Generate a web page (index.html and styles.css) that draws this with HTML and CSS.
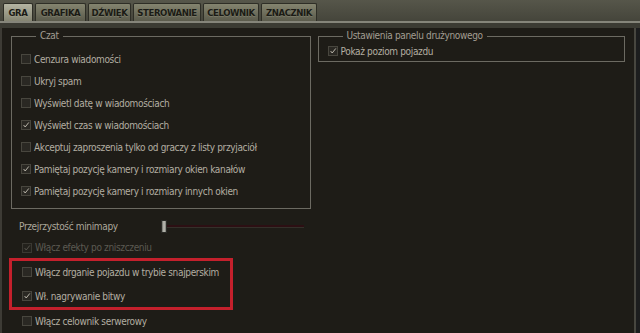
FILE: index.html
```html
<!DOCTYPE html>
<html lang="pl">
<head>
<meta charset="utf-8">
<title>Ustawienia</title>
<link rel="stylesheet" href="styles.css">
</head>
<body>
<div class="tabbar">
  <div class="tab active">GRA</div>
  <div class="tab">GRAFIKA</div>
  <div class="tab">DŹWIĘK</div>
  <div class="tab">STEROWANIE</div>
  <div class="tab">CELOWNIK</div>
  <div class="tab">ZNACZNIK</div>
</div>
<div class="tabline"></div>
<div class="strip"></div>
<div class="panel">
  <div class="groups">
    <fieldset class="group chat">
      <legend>Czat</legend>
      <label class="row"><span class="cb"></span>Cenzura wiadomości</label>
      <label class="row"><span class="cb"></span>Ukryj spam</label>
      <label class="row"><span class="cb"></span>Wyświetl datę w wiadomościach</label>
      <label class="row"><span class="cb on"><svg viewBox="0 0 10 10"><polyline points="2,5 4,7.5 8.5,1.8"/></svg></span>Wyświetl czas w wiadomościach</label>
      <label class="row"><span class="cb"></span>Akceptuj zaproszenia tylko od graczy z listy przyjaciół</label>
      <label class="row"><span class="cb on"><svg viewBox="0 0 10 10"><polyline points="2,5 4,7.5 8.5,1.8"/></svg></span>Pamiętaj pozycję kamery i rozmiary okien kanałów</label>
      <label class="row"><span class="cb on"><svg viewBox="0 0 10 10"><polyline points="2,5 4,7.5 8.5,1.8"/></svg></span>Pamiętaj pozycję kamery i rozmiary innych okien</label>
    </fieldset>
    <fieldset class="group team">
      <legend>Ustawienia panelu drużynowego</legend>
      <label class="row short"><span class="cb on"><svg viewBox="0 0 10 10"><polyline points="2,5 4,7.5 8.5,1.8"/></svg></span>Pokaż poziom pojazdu</label>
    </fieldset>
  </div>
  <div class="slider-row">
    <span class="slider-label">Przejrzystość minimapy</span>
    <span class="thumb"></span>
    <span class="track"></span>
  </div>
  <label class="row loose disabled eff"><span class="cb on"><svg viewBox="0 0 10 10"><polyline points="2,5 4,7.5 8.5,1.8"/></svg></span>Włącz efekty po zniszczeniu</label>
  <div class="highlight">
    <label class="row"><span class="cb"></span>Włącz drganie pojazdu w trybie snajperskim</label>
    <label class="row"><span class="cb on"><svg viewBox="0 0 10 10"><polyline points="2,5 4,7.5 8.5,1.8"/></svg></span>Wł. nagrywanie bitwy</label>
  </div>
  <label class="row loose"><span class="cb"></span>Włącz celownik serwerowy</label>
</div>
</body>
</html>
```
FILE: styles.css
```css
html, body {
  margin: 0;
  padding: 0;
  height: 100%;
  overflow: hidden;
}
body {
  background: #1c1d1e;
  font-family: "DejaVu Sans Condensed", "Liberation Sans", sans-serif;
  font-size: 10px;
  letter-spacing: -0.35px;
  color: #b3aea2;
}
.tabbar {
  height: 18px;
  padding: 3px 0 0 3px;
  display: grid;
  grid-template-columns: 30px 51px 43px 68px 56px 56px;
  gap: 2px;
  background: linear-gradient(#56564a, #45453b);
}
.tab {
  height: 17px;
  display: flex;
  align-items: center;
  justify-content: center;
  font-weight: bold;
  font-size: 9.5px;
  letter-spacing: -0.4px;
  white-space: nowrap;
  overflow: hidden;
  color: #1b1b15;
  text-shadow: 0 1px 0 rgba(200,200,180,0.2);
  background: linear-gradient(#84846f, #5b5b4c);
  border: 1px solid #2e2e26;
  border-bottom: none;
  border-radius: 2px 2px 0 0;
}
.tab.active {
  background: linear-gradient(#b4b4a2, #858572);
}
.tabline {
  height: 2px;
  background: #85857a;
}
.strip {
  height: 5px;
  background: #3b3b33;
}
.panel {
  height: 305px;
  margin-right: 4px;
  padding: 2px 9px 0 9px;
  background: #1e1c17;
  border-left: 2px solid #3d3b35;
  border-right: 2px solid #47463f;
}
.groups {
  display: flex;
  align-items: flex-start;
  gap: 7px;
}
.group {
  margin: 0;
  border: 1px solid #6c6a62;
  min-width: 0;
}
.group legend {
  padding: 0 4px;
  margin-left: 15px;
  line-height: 12px;
  font-size: 10px;
  color: #a29d92;
}
.chat {
  width: 281px;
  padding: 6px 9px 6px 9px;
}
.team {
  width: 289px;
  padding: 1px 9px 2px 9px;
}
.row {
  display: flex;
  align-items: center;
  gap: 3px;
  height: 22px;
  white-space: nowrap;
}
.row.short {
  height: 16px;
}
.row.loose {
  padding-left: 11px;
}
.eff {
  height: 21px;
}
.disabled {
  color: #5c5a52;
}
.cb {
  width: 8px;
  height: 8px;
  flex: none;
  border: 1px solid #48463e;
  background: #2a2823;
  display: flex;
}
.cb svg {
  width: 8px;
  height: 8px;
}
.cb polyline {
  fill: none;
  stroke: #cbc6ba;
  stroke-width: 1.1;
}
.disabled .cb {
  border-color: #3a3832;
  background: #23211c;
}
.disabled .cb polyline {
  stroke: #5c5a52;
}
.slider-row {
  margin-top: 6px;
  height: 22px;
  display: flex;
  align-items: center;
  padding-left: 8px;
  width: 285px;
}
.slider-label {
  width: 142px;
  flex: none;
  color: #aca79b;
}
.thumb {
  width: 4px;
  height: 11px;
  flex: none;
  border: 1px solid #2a2a26;
  background: linear-gradient(90deg, #6c6c66, #c4c4bc 50%, #7a7a74);
}
.track {
  flex: 1;
  height: 2px;
  background: #2c0f13;
  border-bottom: 1px solid #34302a;
}
.highlight {
  margin-left: -2px;
  width: 208px;
  padding: 0 0 0 10px;
  border: 3px solid #c4202c;
  display: flex;
  flex-direction: column;
  gap: 2px;
}
```
